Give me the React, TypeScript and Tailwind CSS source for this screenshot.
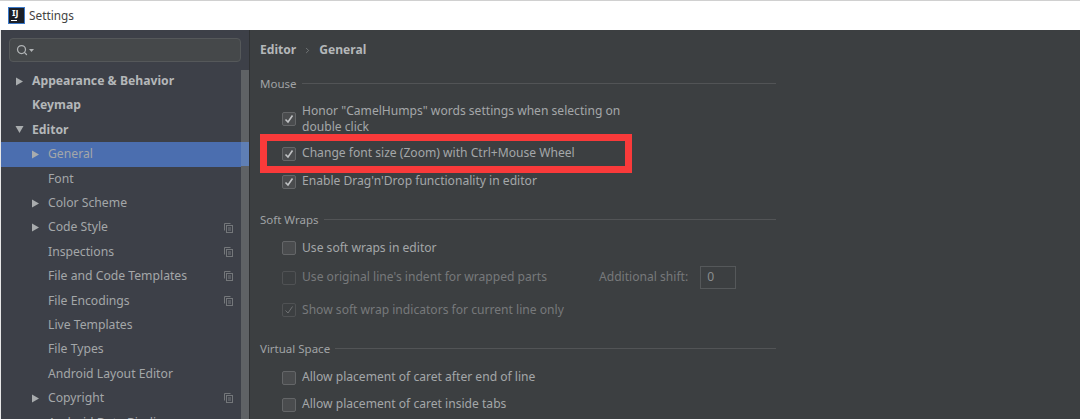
import React from "react";
import { Search, ChevronRight } from "lucide-react";

const FONT = { fontFamily: '"Noto Sans", "Open Sans", sans-serif' };

type TreeItem = { label: string; depth: 0 | 1; bold?: boolean; arrow?: "right" | "down"; copy?: boolean; selected?: boolean };

const tree: TreeItem[] = [
  { label: "Appearance & Behavior", depth: 0, bold: true, arrow: "right" },
  { label: "Keymap", depth: 0, bold: true },
  { label: "Editor", depth: 0, bold: true, arrow: "down" },
  { label: "General", depth: 1, arrow: "right", selected: true },
  { label: "Font", depth: 1 },
  { label: "Color Scheme", depth: 1, arrow: "right" },
  { label: "Code Style", depth: 1, arrow: "right", copy: true },
  { label: "Inspections", depth: 1, copy: true },
  { label: "File and Code Templates", depth: 1, copy: true },
  { label: "File Encodings", depth: 1, copy: true },
  { label: "Live Templates", depth: 1 },
  { label: "File Types", depth: 1 },
  { label: "Android Layout Editor", depth: 1 },
  { label: "Copyright", depth: 1, arrow: "right", copy: true },
  { label: "Android Data Binding", depth: 1 },
];

function Arrow({ dir }: { dir: "right" | "down" }) {
  return (
    <svg width="9" height="9" viewBox="0 0 9 9" className="shrink-0">
      {dir === "right" ? <path d="M1 0.5 L8 4.5 L1 8.5 Z" fill="#a9acae" /> : <path d="M0.5 1 L8.5 1 L4.5 8 Z" fill="#a9acae" />}
    </svg>
  );
}

function CopyIcon() {
  return (
    <svg width="9" height="10" viewBox="0 0 9 10" fill="none" stroke="#74777a" strokeWidth="1" className="shrink-0">
      <path d="M0.5 7.5 V0.5 H6.5" />
      <rect x="2.5" y="2.5" width="6" height="7" />
      <path d="M4 5 H7 M4 7 H7" />
    </svg>
  );
}

function TreeRow({ item }: { item: TreeItem }) {
  return (
    <div className={`flex h-[24.4px] items-center ${item.selected ? "bg-[#4b6eaf]" : ""}`}>
      <div className={`flex items-center ${item.depth === 0 ? "w-[31px] pl-[14px]" : "w-[47px] pl-[30px]"}`}>
        {item.arrow && <Arrow dir={item.arrow} />}
      </div>
      <span className={`flex-1 whitespace-nowrap text-[12.2px] ${item.bold ? "font-bold text-[#b4b7b9]" : "text-[#a4a7a9]"}`}>{item.label}</span>
      {item.copy && <div className="pr-[8px]"><CopyIcon /></div>}
    </div>
  );
}

function Checkbox({ checked, disabled }: { checked?: boolean; disabled?: boolean }) {
  return (
    <div className={`flex h-[14px] w-[14px] shrink-0 items-center justify-center rounded-[2px] border ${disabled ? "border-[#505254] bg-transparent" : "border-[#646668] bg-[#4a4c4e]"}`}>
      {checked && (
        <svg width="10" height="10" viewBox="0 0 10 10" fill="none" stroke={disabled ? "#6f7173" : "#c0c2c4"} strokeWidth={disabled ? 1 : 1.6}>
          <path d="M1.5 5.5 L4 8 L8.5 1.5" />
        </svg>
      )}
    </div>
  );
}

function SectionTitle({ title, className }: { title: string; className: string }) {
  return (
    <div className={`flex items-center gap-[5px] ${className}`}>
      <span className="text-[11.5px] leading-none text-[#a0a3a5]">{title}</span>
      <div className="h-px flex-1 bg-[#525456]" />
    </div>
  );
}

function Option({ label, checked, disabled, className }: { label: string; checked?: boolean; disabled?: boolean; className: string }) {
  return (
    <div className={`flex items-center gap-[6px] pl-[22px] ${className}`}>
      <Checkbox checked={checked} disabled={disabled} />
      <span className={`whitespace-nowrap text-[12.1px] leading-none ${disabled ? "text-[#77797b]" : "text-[#a4a7a9]"}`}>{label}</span>
    </div>
  );
}

export default function App() {
  return (
    <div style={FONT} className="relative flex h-[419px] w-[1080px] flex-col overflow-hidden bg-[#3c3f41]">
      {/* Title bar */}
      <div className="flex h-[30px] shrink-0 items-center gap-[5px] border-t border-[#d0d0d0] bg-white pl-[9px]">
        <div className="relative h-[15px] w-[15px] bg-[#1b1f27] outline outline-[#3b79c9]">
          <span className="absolute left-[3px] top-[-1px] text-[9px] font-bold leading-[12px] text-white">IJ</span>
          <div className="absolute bottom-[2px] left-[2px] h-px w-[6px] bg-white" />
        </div>
        <span className="text-[11.8px] text-[#444]">Settings</span>
      </div>

      <div className="flex min-h-0 flex-1">
        {/* Sidebar */}
        <div className="flex w-[250px] shrink-0 flex-col border-l border-r border-[#2f3133] border-l-[#e8e8e8] bg-[#3d4048]">
          <div className="px-[8px] pt-[8px]">
            <div className="flex h-[24px] items-center gap-px rounded-[4px] border border-[#55585a] bg-[#45484a] pl-[6px]">
              <Search size={12} strokeWidth={2.5} className="text-[#b0b3b5]" />
              <svg width="5" height="3" viewBox="0 0 5 3"><path d="M0 0 H5 L2.5 3 Z" fill="#b0b3b5" /></svg>
            </div>
          </div>
          <div className="mt-[7px] flex min-h-0 flex-1">
            <div className="min-w-0 flex-1">
              {tree.map((item) => (
                <TreeRow key={item.label} item={item} />
              ))}
            </div>
            {/* Scrollbar thumb, tinted where it crosses the selected row */}
            <div className="flex w-[8px] shrink-0 flex-col pt-[1px]">
              <div className="h-[72px] bg-[#5f6265]" />
              <div className="h-[24px] bg-[#5f7fb5]" />
              <div className="flex-1 bg-[#5f6265]" />
            </div>
          </div>
        </div>

        {/* Content */}
        <div className="min-w-0 flex-1 pl-[10px]">
          <div className="flex h-[41px] items-center gap-[7px] text-[12.1px] font-bold text-[#b4b7b9]">
            <span>Editor</span>
            <ChevronRight size={9} strokeWidth={1.5} className="text-[#9a9d9f]" />
            <span>General</span>
          </div>
          <div className="w-[516px]">
            <SectionTitle title="Mouse" className="mt-[7px]" />
            <div className="mt-[13px] flex items-center gap-[6px] pl-[22px]">
              <Checkbox checked />
              <span className="text-[12.1px] leading-[16.5px] text-[#a4a7a9]">
                Honor "CamelHumps" words settings when selecting on
                <br />
                double click
              </span>
            </div>
            <Option label="Change font size (Zoom) with Ctrl+Mouse Wheel" checked className="mt-[11px]" />
            <Option label="Enable Drag'n'Drop functionality in editor" checked className="mt-[14px]" />

            <SectionTitle title="Soft Wraps" className="mt-[25px]" />
            <Option label="Use soft wraps in editor" className="mt-[16px]" />
            <div className="mt-[11px] flex items-center">
              <Option label="Use original line's indent for wrapped parts" disabled className="" />
              <span className="ml-[52px] whitespace-nowrap text-[12.1px] leading-none text-[#77797b]">Additional shift:</span>
              <div className="ml-[12px] flex h-[23px] w-[36px] items-center border border-[#55585a] pl-[6px] text-[12.1px] text-[#8a8d8f]">0</div>
            </div>
            <Option label="Show soft wrap indicators for current line only" checked disabled className="mt-[14px]" />

            <SectionTitle title="Virtual Space" className="mt-[26px]" />
            <Option label="Allow placement of caret after end of line" className="mt-[16px]" />
            <Option label="Allow placement of caret inside tabs" className="mt-[13px]" />
          </div>
        </div>
      </div>

      {/* Annotation drawn over the screenshot */}
      <div className="absolute left-[260px] top-[134px] h-[39px] w-[372px] border-[7px] border-[#f93a3a]" />
    </div>
  );
}
